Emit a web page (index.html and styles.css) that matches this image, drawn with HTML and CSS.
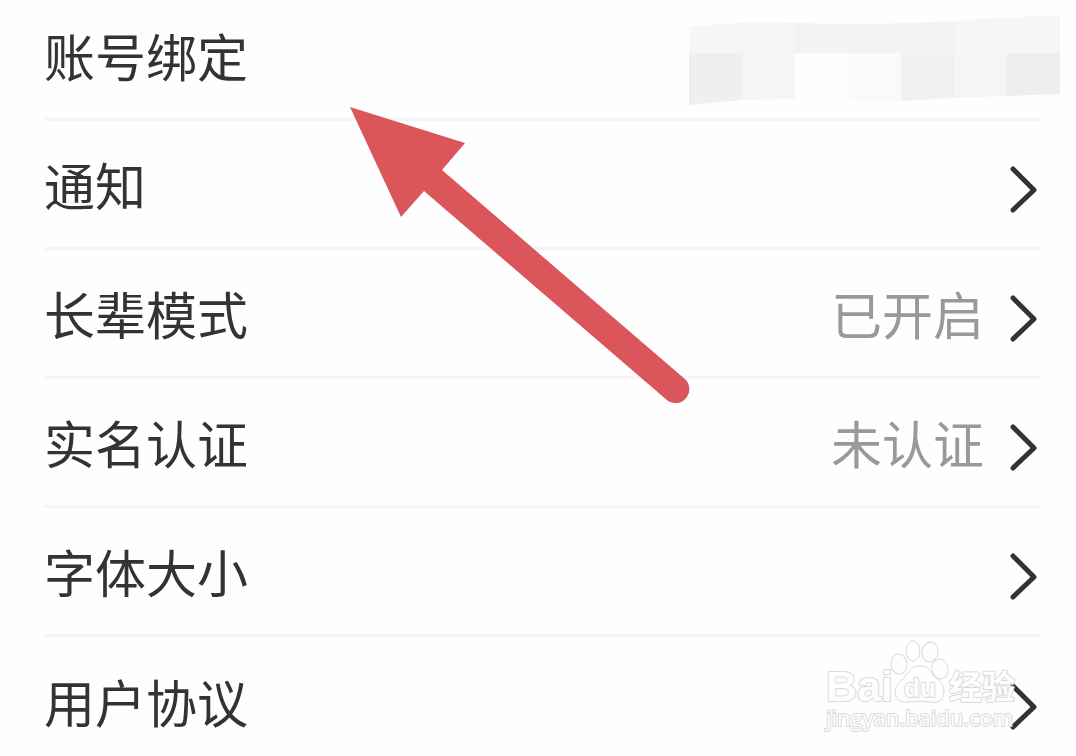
FILE: index.html
```html
<!DOCTYPE html>
<html lang="zh-CN">
<head>
<meta charset="utf-8">
<meta name="viewport" content="width=device-width, initial-scale=1">
<title>设置</title>
<link rel="stylesheet" href="styles.css">
</head>
<body>
<main class="settings">
  <nav class="list">
    <a class="row row-first" href="#account"><span class="label">账号绑定</span>
      <svg class="mask" viewBox="0 0 371 90" aria-hidden="true">
        <path fill="#f6f6f6" d="M0 12Q50 6 105 8Q180 11 250 7Q320 1 371 1V38H0Z"/>
        <path fill="#f3f3f3" d="M105 8Q180 11 265 6V38H105Z"/>
        <path fill="#efefef" d="M0 38H53V85L0 90Z"/>
        <path fill="#f5f5f5" d="M53 38H106V84L53 85Z"/>
        <path fill="#fafafa" d="M160 38H212V86H160Z"/>
        <path fill="#f1f1f1" d="M212 38H265V83L212 86Z"/>
        <path fill="#f5f5f5" d="M265 38H318V81L265 83Z"/>
        <path fill="#eeeeee" d="M318 38H371V79L318 81Z"/>
      </svg>
    </a>
    <a class="row" href="#notice"><span class="label">通知</span><svg class="chevron" viewBox="0 0 30 50" aria-hidden="true"><path d="M3 5 24 26 3 46"/></svg></a>
    <a class="row" href="#elder"><span class="label">长辈模式</span><span class="value">已开启</span><svg class="chevron" viewBox="0 0 30 50" aria-hidden="true"><path d="M3 5 24 26 3 46"/></svg></a>
    <a class="row" href="#identity"><span class="label">实名认证</span><span class="value">未认证</span><svg class="chevron" viewBox="0 0 30 50" aria-hidden="true"><path d="M3 5 24 26 3 46"/></svg></a>
    <a class="row" href="#font"><span class="label">字体大小</span><svg class="chevron" viewBox="0 0 30 50" aria-hidden="true"><path d="M3 5 24 26 3 46"/></svg></a>
    <a class="row row-last" href="#terms"><span class="label">用户协议</span><svg class="chevron" viewBox="0 0 30 50" aria-hidden="true"><path d="M3 5 24 26 3 46"/></svg></a>
  </nav>
  <svg class="arrow" viewBox="0 0 342 300" aria-hidden="true">
    <path d="M0 0 115 36 92 63 336 273A14 14 0 0 1 318 294L74 84 51 110Z"/>
  </svg>
  <svg class="watermark" viewBox="0 0 200 100" role="img" aria-label="Baidu 经验">
    <g class="mark">
      <ellipse cx="77" cy="24" rx="8" ry="10" transform="rotate(-8 77 24)"/>
      <ellipse cx="91" cy="11" rx="7" ry="10"/>
      <ellipse cx="108" cy="12" rx="8" ry="10" transform="rotate(10 108 12)"/>
      <ellipse cx="118" cy="29" rx="8" ry="10" transform="rotate(-12 118 29)"/>
      <path d="M98 26C89 26 87 32 83 37C78 42 73 45 73 52C73 61 81 63 87 62Q98 60 108 62C116 64 122 60 122 51C122 44 117 40 112 36C108 31 107 26 98 26Z"/>
      <text class="brand" x="4" y="61">Bai</text>
      <text class="brand-du" x="82" y="57">du</text>
      <text class="brand-cn" x="127" y="59">经验</text>
      <text class="site" x="4" y="86">jingyan.baidu.com</text>
    </g>
  </svg>
</main>
</body>
</html>
```
FILE: styles.css
```css
* { box-sizing: border-box; }

body {
  margin: 0;
  background: #fefefe;
  color: #333;
  font-family: "Noto Sans CJK SC", "Noto Sans", sans-serif;
}

.settings {
  position: relative;
  overflow: hidden;
}

.list {
  display: flex;
  flex-direction: column;
  padding: 0 36px 0 44px;
}

.row {
  display: flex;
  align-items: center;
  min-height: 129px;
  padding-top: 10px;
  border-bottom: 3px solid #f5f5f5;
  color: inherit;
  font-size: 51px;
  line-height: 60px;
  text-decoration: none;
}

.row-first {
  min-height: 121px;
  padding-top: 2px;
}

.row-last {
  min-height: 119px;
  padding-top: 18px;
  border-bottom: 0;
}

.label {
  flex: 1;
  padding-bottom: 10px;
}

.value {
  padding-bottom: 10px;
  margin-right: 26px;
  color: #999;
}

.mask {
  flex: none;
  width: 371px;
  height: 90px;
  margin-right: -20px;
}

.chevron {
  flex: none;
  width: 30px;
  height: 50px;
  fill: none;
  stroke: #333;
  stroke-width: 5;
  stroke-linecap: round;
  stroke-linejoin: round;
}

.arrow {
  position: absolute;
  top: 107px;
  left: 350px;
  width: 342px;
  height: 300px;
  fill: #db565b;
  pointer-events: none;
}

.watermark {
  position: absolute;
  right: 54px;
  bottom: 16px;
  width: 200px;
  height: 100px;
  overflow: visible;
  pointer-events: none;
}

.mark {
  fill: #fefefe;
  stroke: #d9d9d9;
  stroke-width: 1;
}

.mark text {
  stroke-width: 2;
  stroke-linejoin: round;
  paint-order: stroke;
}

.brand,
.brand-du {
  font-family: "Liberation Sans", Arial, sans-serif;
  font-weight: 700;
}

.brand { font-size: 43px; }

.brand-du { font-size: 26px; }

.brand-cn {
  font-size: 33px;
  font-weight: 700;
}

.site {
  font-family: "Open Sans", sans-serif;
  font-size: 22px;
  font-weight: 400;
}
```
